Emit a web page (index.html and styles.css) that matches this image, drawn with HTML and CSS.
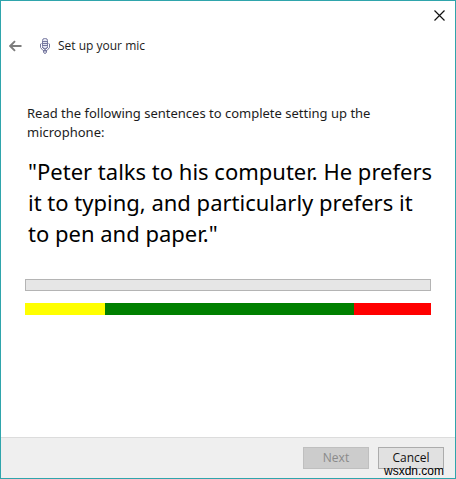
FILE: index.html
```html
<!DOCTYPE html>
<html lang="en">
<head>
<meta charset="utf-8">
<title>Set up your mic</title>
<link rel="stylesheet" href="styles.css">
</head>
<body>
<div class="window">
  <header class="titlebar">
    <button class="icon-button close" type="button" aria-label="Close">
      <svg width="11" height="11" viewBox="0 0 11 11"><path d="M.5.5l10 10M10.500.5l-10 10" fill="none" stroke="#111" stroke-width="1.200"/></svg>
    </button>
  </header>
  <div class="heading">
    <button class="icon-button" type="button" aria-label="Back">
      <svg width="13" height="12" viewBox="0 0 13 12"><path d="M12.500 6H1.500M6 1.200L1.200 6L6 10.800" fill="none" stroke="#7d7d7d" stroke-width="1.900"/></svg>
    </button>
    <svg class="mic" width="12" height="16" viewBox="0 0 12 16" fill="none" stroke="#77799f">
      <rect x="3.500" y=".5" width="5" height="10" rx="2" fill="#e6e7f3"/>
      <path d="M3.500 3.500h5M3.500 5.500h5M3.500 7.500h5"/>
      <path d="M2.500 5.500L1.500 6v3.500L4 12.500h4l2.500-3V6l-1-.5M3 9l2 2h2l2-2M4.500 12.500v2l1 1h1l1-1v-2M6 11v4"/>
    </svg>
    <h1 class="title">Set up your mic</h1>
  </div>
  <main class="content">
    <p class="instruction">Read the following sentences to complete setting up the microphone:</p>
    <p class="sentence">"Peter talks to his computer. He prefers it to typing, and particularly prefers it to pen and paper."</p>
    <div class="progress" role="progressbar" aria-label="Microphone level"></div>
    <div class="levels">
      <span class="low"></span><span class="good"></span><span class="high"></span>
    </div>
  </main>
  <footer class="footer">
    <button class="button" type="button" disabled>Next</button>
    <button class="button" type="button">Cancel</button>
    <span class="watermark">wsxdn.com</span>
  </footer>
</div>
</body>
</html>
```
FILE: styles.css
```css
* {
  box-sizing: border-box;
}

body {
  margin: 0;
  font-family: "Noto Sans", "Open Sans", sans-serif;
  color: #1c1c1c;
  background: #fff;
}

.window {
  display: flex;
  flex-direction: column;
  min-height: 100vh;
  border: 1px solid #2fa5ac;
}

.titlebar {
  display: flex;
  justify-content: flex-end;
  padding: 8px 10px 0;
}

.icon-button {
  display: flex;
  padding: 0;
  border: 0;
  background: none;
}

.close {
  height: 23px;
  padding-top: 1px;
}

.heading {
  display: flex;
  align-items: center;
  padding: 4px 8px 0;
}

.mic {
  margin: 0 7px 0 17px;
}

.title {
  margin: 0;
  font-family: "Open Sans", "Noto Sans", sans-serif;
  font-size: 12px;
  font-weight: 400;
  line-height: 20px;
}

.content {
  flex: 1;
  padding: 48px 24px 24px;
}

.instruction {
  margin: 0 2px;
  font-size: 13px;
  line-height: 19px;
}

.sentence {
  margin: 14px -4px 30px 3px;
  font-size: 22px;
  line-height: 31px;
  color: #000;
}

.progress {
  height: 12px;
  border: 1px solid #b4b4b4;
  background: #e6e6e6;
}

.levels {
  display: flex;
  height: 12px;
  margin-top: 12px;
}

.low {
  flex: 80;
  background: #ff0;
}

.good {
  flex: 249;
  background: #008000;
}

.high {
  flex: 77;
  background: #f00;
}

.footer {
  position: relative;
  display: flex;
  justify-content: flex-end;
  gap: 9px;
  padding: 9px 11px;
  border-top: 1px solid #dcdcdc;
  background: #efefef;
}

.button {
  width: 66px;
  height: 22px;
  padding: 0;
  border: 1px solid #acacac;
  background: #e1e1e1;
  font: 12px/18px "Open Sans", "Noto Sans", sans-serif;
  color: #111;
}

.button:disabled {
  border-color: #bfbfbf;
  background: #ccc;
  color: #8a8a8a;
}

.watermark {
  position: absolute;
  right: 11px;
  bottom: 0;
  font: 12px/14px "Liberation Sans", Arial, sans-serif;
  color: #000;
}
```
